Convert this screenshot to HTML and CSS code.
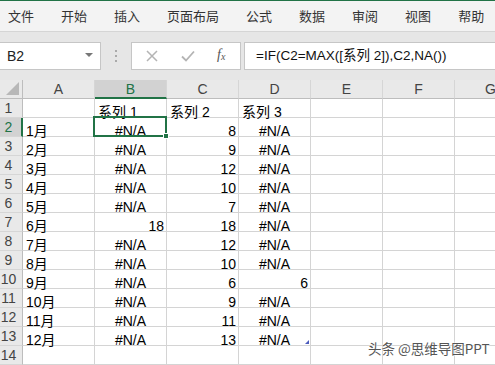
FILE: index.html
```html
<!DOCTYPE html>
<html lang="zh">
<head>
<meta charset="utf-8">
<link rel="stylesheet" href="styles.css">
</head>
<body>
<div class="app">
  <div class="ribbon">
    <span class="tab">文件</span><span class="tab">开始</span><span class="tab">插入</span><span class="tab">页面布局</span><span class="tab">公式</span><span class="tab">数据</span><span class="tab">审阅</span><span class="tab">视图</span><span class="tab">帮助</span>
  </div>
  <div class="fbar">
    <div class="namebox"><span class="ref">B2</span><span class="caret"></span></div>
    <div class="grip"><i></i><i></i><i></i></div>
    <div class="btns">
      <svg class="ic" width="12" height="12" viewBox="0 0 12 12"><path d="M1 1L11 11M11 1L1 11" stroke="#b4b4b4" stroke-width="1.5" fill="none"/></svg>
      <svg class="ic" width="14" height="12" viewBox="0 0 14 12"><path d="M1 6.5L5 10.5L13 1.5" stroke="#b4b4b4" stroke-width="1.8" fill="none"/></svg>
      <span class="fx">f<sub>x</sub></span>
    </div>
    <div class="formula">=IF(C2=MAX([系列 2]),C2,NA())</div>
  </div>
  <div class="sheet">
    <div class="grid">
      <div class="corner"><span class="tri"></span></div>
      <div class="ch">A</div><div class="ch sel">B</div><div class="ch">C</div><div class="ch">D</div><div class="ch">E</div><div class="ch">F</div><div class="ch">G</div>

      <div class="rh">1</div><div class="c"></div><div class="c l">系列 1</div><div class="c l">系列 2</div><div class="c l">系列 3</div><div class="c"></div><div class="c"></div><div class="c"></div>
      <div class="rh sel">2</div><div class="c l">1月</div><div class="c m">#N/A</div><div class="c r">8</div><div class="c m">#N/A</div><div class="c"></div><div class="c"></div><div class="c"></div>
      <div class="rh">3</div><div class="c l">2月</div><div class="c m">#N/A</div><div class="c r">9</div><div class="c m">#N/A</div><div class="c"></div><div class="c"></div><div class="c"></div>
      <div class="rh">4</div><div class="c l">3月</div><div class="c m">#N/A</div><div class="c r">12</div><div class="c m">#N/A</div><div class="c"></div><div class="c"></div><div class="c"></div>
      <div class="rh">5</div><div class="c l">4月</div><div class="c m">#N/A</div><div class="c r">10</div><div class="c m">#N/A</div><div class="c"></div><div class="c"></div><div class="c"></div>
      <div class="rh">6</div><div class="c l">5月</div><div class="c m">#N/A</div><div class="c r">7</div><div class="c m">#N/A</div><div class="c"></div><div class="c"></div><div class="c"></div>
      <div class="rh">7</div><div class="c l">6月</div><div class="c r">18</div><div class="c r">18</div><div class="c m">#N/A</div><div class="c"></div><div class="c"></div><div class="c"></div>
      <div class="rh">8</div><div class="c l">7月</div><div class="c m">#N/A</div><div class="c r">12</div><div class="c m">#N/A</div><div class="c"></div><div class="c"></div><div class="c"></div>
      <div class="rh">9</div><div class="c l">8月</div><div class="c m">#N/A</div><div class="c r">10</div><div class="c m">#N/A</div><div class="c"></div><div class="c"></div><div class="c"></div>
      <div class="rh">10</div><div class="c l">9月</div><div class="c m">#N/A</div><div class="c r">6</div><div class="c r">6</div><div class="c"></div><div class="c"></div><div class="c"></div>
      <div class="rh">11</div><div class="c l">10月</div><div class="c m">#N/A</div><div class="c r">9</div><div class="c m">#N/A</div><div class="c"></div><div class="c"></div><div class="c"></div>
      <div class="rh">12</div><div class="c l">11月</div><div class="c m">#N/A</div><div class="c r">11</div><div class="c m">#N/A</div><div class="c"></div><div class="c"></div><div class="c"></div>
      <div class="rh">13</div><div class="c l">12月</div><div class="c m">#N/A</div><div class="c r">13</div><div class="c m marked">#N/A</div><div class="c"></div><div class="c"></div><div class="c"></div>
      <div class="rh">14</div><div class="c"></div><div class="c"></div><div class="c"></div><div class="c"></div><div class="c"></div><div class="c"></div><div class="c"></div>
    </div>
    <div class="selbox"><span class="handle"></span></div>
    <div class="watermark">头条 @思维导图PPT</div>
  </div>
</div>
</body>
</html>
```

FILE: styles.css
```css
* { box-sizing: border-box; }
html, body { margin: 0; padding: 0; }
body {
  width: 495px;
  height: 365px;
  overflow: hidden;
  background: #fff;
  font-family: "Liberation Sans", Arial, "Noto Sans CJK SC", sans-serif;
}
.app { width: 495px; height: 365px; overflow: hidden; }

.ribbon {
  height: 32px;
  background: #f3f3f3;
  border-top: 1px solid #217346;
  border-bottom: 1px solid #d5d5d5;
  display: flex;
  align-items: center;
  gap: 27px;
  padding-left: 8px;
  font-family: "Noto Sans CJK SC", sans-serif;
  font-size: 13px;
  color: #333;
  white-space: nowrap;
}
.tab { line-height: 16px; }

.fbar {
  height: 48px;
  background: #e6e6e6;
  display: flex;
  align-items: flex-start;
  padding-top: 10px;
}
.namebox {
  width: 101px;
  height: 28px;
  background: #fff;
  border: 1px solid #c6c6c6;
  border-left: none;
  display: flex;
  align-items: center;
  justify-content: space-between;
  padding: 0 7px 0 7px;
  font-size: 14px;
  color: #222;
}
.caret {
  width: 0; height: 0;
  border-left: 4px solid transparent;
  border-right: 4px solid transparent;
  border-top: 4px solid #777;
  margin-top: -3px;
}
.grip {
  width: 30px;
  height: 28px;
  display: flex;
  flex-direction: column;
  align-items: center;
  justify-content: center;
  gap: 3px;
}
.grip i { display: block; width: 2px; height: 2px; background: #aaa; }
.btns {
  width: 110px;
  height: 28px;
  background: #fff;
  border: 1px solid #c6c6c6;
  display: flex;
  align-items: center;
  padding-left: 14px;
  gap: 0;
}
.btns .ic:nth-child(1) { margin-left: 0; }
.btns .ic:nth-child(2) { margin-left: 23px; }
.fx {
  margin-left: 22px;
  font-family: "Liberation Serif", serif;
  font-style: italic;
  font-size: 14px;
  color: #555;
  line-height: 14px;
}
.fx sub { font-size: 10px; vertical-align: -1px; }
.formula {
  margin-left: 3px;
  flex: 1;
  height: 28px;
  background: #fff;
  border: 1px solid #c6c6c6;
  border-right: none;
  padding-left: 11px;
  font-size: 13.5px;
  line-height: 26px;
  color: #111;
  white-space: nowrap;
}

.sheet { position: relative; }
.grid {
  display: grid;
  grid-template-columns: 23px repeat(7, 72px);
  grid-auto-rows: 19px;
  font-size: 14px;
}
.corner, .ch, .rh {
  background: #e9e9e9;
  color: #444;
  border-right: 1px solid #c8c8c8;
  border-bottom: 1px solid #c8c8c8;
}
.corner { position: relative; border-right-color: #bdbdbd; border-bottom-color: #bdbdbd; }
.tri {
  position: absolute;
  right: 3px;
  bottom: 3px;
  width: 0; height: 0;
  border-left: 13px solid transparent;
  border-bottom: 13px solid #b8b8b8;
}
.ch {
  text-align: center;
  font-size: 14px;
  line-height: 19px;
  border-right-color: #d6d6d6;
  border-bottom-color: #bdbdbd;
}
.ch.sel {
  background: #d2d2d2;
  color: #217346;
  border-bottom: 2px solid #217346;
}
.rh {
  font-size: 14px;
  line-height: 19px;
  text-align: center;
  padding-right: 5px;
  border-right-color: #bdbdbd;
  border-bottom-color: #d6d6d6;
}
.rh.sel {
  background: #d2d2d2;
  color: #217346;
  border-right: 2px solid #217346;
  padding-right: 4px;
}
.c {
  border-right: 1px solid #d4d4d4;
  border-bottom: 1px solid #d4d4d4;
  padding-top: 4px;
  line-height: 18px;
  color: #000;
  white-space: nowrap;
  position: relative;
}
.c.l { padding-left: 3px; }
.c.r { text-align: right; padding-right: 2px; }
.c.m { text-align: center; }
.c.marked::after {
  content: "";
  position: absolute;
  right: 1px;
  bottom: 1px;
  width: 0; height: 0;
  border-left: 4px solid transparent;
  border-bottom: 4px solid #4b5bbd;
}

.selbox {
  position: absolute;
  left: 93px;
  top: 36px;
  width: 74px;
  height: 21px;
  border: 2px solid #217346;
}
.handle {
  position: absolute;
  right: -4px;
  bottom: -4px;
  width: 6px;
  height: 6px;
  background: #217346;
  border: 1px solid #fff;
}
.watermark {
  position: absolute;
  left: 368px;
  top: 259px;
  font-family: "Noto Sans CJK SC", sans-serif;
  font-size: 13.5px;
  color: #555;
  line-height: 18px;
  text-shadow: 0 0 2px #fff, 0 0 2px #fff;
  white-space: nowrap;
}
```
